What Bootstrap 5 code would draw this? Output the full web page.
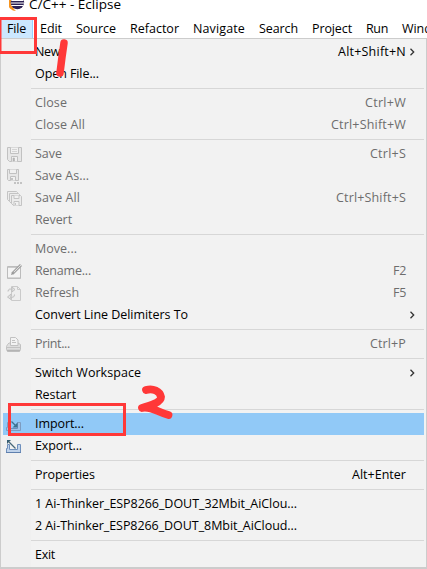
<!DOCTYPE html>
<html lang="en">
<head>
<meta charset="utf-8">
<title>C/C++ - Eclipse</title>
<link rel="stylesheet" href="https://cdn.jsdelivr.net/npm/bootstrap@5.3.0/dist/css/bootstrap.min.css">
<style>
html,body{width:427px;height:569px;overflow:hidden;background:#fff}
body{font-family:"Open Sans","Noto Sans",sans-serif;font-size:12.5px;line-height:22px;color:#000}
.titlebar{height:18px}
.titlebar svg{margin:-5px 0 0 9px}
.caption{font-size:13.5px;line-height:20px;margin:-6px 0 0 4px}
.menubar{height:20px;line-height:20px;flex-wrap:nowrap;overflow:hidden}
.menubar .nav-link{padding:1px 7px 0;color:#000;height:20px;line-height:20px;flex:none}
.menubar .nav-link.active{background:#cce8ff;border-right:1px solid #99d1ff;padding-right:6px}
.filemenu{height:531px;background:#f2f2f2;border:1px solid #ccc;border-bottom-width:2px;padding:2px 2px 0;background-image:linear-gradient(#f0f0f0,#f0f0f0);background-size:30px 100%;background-repeat:no-repeat}
.entry{height:22px;line-height:22px;white-space:nowrap;padding:0;color:#000}
.entry.off{color:#6d6d6d}
.entry.hot{background:#91c9f7}
.entry .ico{width:32px;height:22px;flex:none}
.entry .ico svg{display:block;margin:4px 0 0 4px}
.entry .ico .port{margin-left:3px}
.entry.off .ico svg{opacity:.85}
.entry .keys{margin-left:auto}
.entry .arr{width:18px;flex:none;height:22px}
.entry .arr svg{display:block;margin:7px 0 0 2px}
.rule{height:1px;background:#d7d7d7;margin:3px 0 3px 28px}
[data-w]{display:inline-block;white-space:nowrap}
.markup{left:0;top:0;pointer-events:none}
</style>
<script src="https://cdn.jsdelivr.net/npm/bootstrap@5.3.0/dist/js/bootstrap.bundle.min.js"></script>
</head>
<body class="position-relative m-0">
<header>
  <div class="titlebar d-flex align-items-start">
    <svg width="16" height="16" viewBox="0 0 16 16"><path d="M7 0A8 8 0 0 0 7 16A10 10 0 0 1 7 0" fill="#f7941e"/><circle cx="8.4" cy="7.5" r="6.7" fill="#2c2255"/><path d="M2.3 5.5h12.2M1.8 8h13.2M2.3 10.500h12.2" stroke="#fff" stroke-width="1"/></svg>
    <div class="caption"><span data-w="92">C/C++ - Eclipse</span></div>
  </div>
  <nav class="menubar nav">
    <a class="nav-link active"><span data-w="19">File</span></a>
    <a class="nav-link"><span data-w="22">Edit</span></a>
    <a class="nav-link"><span data-w="40">Source</span></a>
    <a class="nav-link"><span data-w="49">Refactor</span></a>
    <a class="nav-link"><span data-w="52">Navigate</span></a>
    <a class="nav-link"><span data-w="39">Search</span></a>
    <a class="nav-link"><span data-w="40">Project</span></a>
    <a class="nav-link"><span data-w="22">Run</span></a>
    <a class="nav-link"><span data-w="47">Window</span></a>
  </nav>
</header>
<main class="filemenu d-flex flex-column">
  <div class="entry d-flex"><span class="ico"></span><span data-w="25">New</span><span class="keys" data-w="68">Alt+Shift+N</span><span class="arr"><svg width="8" height="8"><path d="M2.5 .8L5.7 4 2.5 7.2" fill="none" stroke="#333" stroke-width="1.3"/></svg></span></div>
  <div class="entry d-flex"><span class="ico"></span><span data-w="64">Open File...</span></div>
  <div class="rule"></div>
  <div class="entry off d-flex"><span class="ico"></span><span data-w="32">Close</span><span class="keys" data-w="41">Ctrl+W</span><span class="arr"></span></div>
  <div class="entry off d-flex"><span class="ico"></span><span data-w="50">Close All</span><span class="keys" data-w="75">Ctrl+Shift+W</span><span class="arr"></span></div>
  <div class="rule"></div>
  <div class="entry off d-flex"><span class="ico"><svg width="16" height="16" fill="none" stroke="#b9b9b9"><path d="M.5 .5h14v14H2.5l-2-2z" fill="#e6e6e6"/><path d="M3.5 .5v6h8v-6M4.5 14.5v-5h6v5" fill="#f2f2f2"/><path d="M5 2.5h5M5 4.5h5" stroke="#d0d0d0"/><path d="M6 11h1.5v3H6z" fill="#aaa" stroke="#aaa" stroke-width=".6"/></svg></span><span data-w="27">Save</span><span class="keys" data-w="36">Ctrl+S</span><span class="arr"></span></div>
  <div class="entry off d-flex"><span class="ico"><svg width="16" height="16" fill="none" stroke="#b9b9b9"><path d="M.5 .5h11v11h-10l-1-1z" fill="#e6e6e6"/><path d="M2.5 .5v4h7v-4M3.5 11.5v-4h5v4" fill="#f2f2f2"/><path d="M5 9v2" stroke="#aaa" stroke-width="1.5"/><path d="M7 14h2M10 14h2M13 14h2" stroke="#aaa" stroke-width="1.5"/></svg></span><span data-w="54">Save As...</span></div>
  <div class="entry off d-flex"><span class="ico"><svg width="16" height="16" fill="#ececec" stroke="#bdbdbd"><path d="M.5 .5h9l1 1v9h-8l-2-2z"/><path d="M2.5 2.5h9l1 1v9h-8l-2-2z"/><path d="M4.5 4.5h9l1 1v9h-8l-2-2z"/><path d="M7 4.5v3h5v-3M7 14.5v-4h5v4" fill="#f2f2f2"/><path d="M8.5 12v2"/></svg></span><span data-w="45">Save All</span><span class="keys" data-w="70">Ctrl+Shift+S</span><span class="arr"></span></div>
  <div class="entry off d-flex"><span class="ico"></span><span data-w="37">Revert</span></div>
  <div class="rule"></div>
  <div class="entry off d-flex"><span class="ico"></span><span data-w="42">Move...</span></div>
  <div class="entry off d-flex"><span class="ico"><svg width="16" height="16" fill="none"><path d="M.5 2.5h13v12H.5z" fill="#f5f5f5" stroke="#b3b3b3"/><path d="M1 3.5h12M1 13.8h12" stroke="#c4c4c4"/><path d="M5.5 9.5L14 1" stroke="#999" stroke-width="3"/><path d="M7 8L14 1" stroke="#ddd"/><path d="M4 11l1-3 2 2z" fill="#888"/></svg></span><span data-w="56">Rename...</span><span class="keys" data-w="13">F2</span><span class="arr"></span></div>
  <div class="entry off d-flex"><span class="ico"><svg width="16" height="16" fill="none"><path d="M4.5 .5h6l3 3v11h-9z" fill="#eee" stroke="#c4c4c4"/><path d="M10.5 .5v3h3" stroke="#c4c4c4"/><path d="M1 5.5C1 3 3 2.5 5 3.5M5 1v5L8 3.5zM7.5 8.5C8 11 5 12 3 11M4 8v5.5L.5 11z" fill="#e3e3e3" stroke="#b8b8b8"/></svg></span><span data-w="44">Refresh</span><span class="keys" data-w="13">F5</span><span class="arr"></span></div>
  <div class="entry d-flex"><span class="ico"></span><span data-w="153">Convert Line Delimiters To</span><span class="keys"></span><span class="arr"><svg width="8" height="8"><path d="M2.5 .8L5.7 4 2.5 7.2" fill="none" stroke="#333" stroke-width="1.3"/></svg></span></div>
  <div class="rule"></div>
  <div class="entry off d-flex"><span class="ico"><svg class="port" width="16" height="16" stroke="#b9b9b9"><path d="M1.5 7.500L3 6h9l2.500 1.500v5l-1 2h-12l-1-2v-3z" fill="#dcdcdc"/><path d="M4.500 8.500v-8h5l2.500 2.500v5.500z" fill="#f4f4f4"/><path d="M6 3.500h3M6 5.500h4M.5 10.500h14" stroke="#bbb"/><path d="M1 13.500h13" stroke="#aaa" stroke-width="1.500"/></svg></span><span data-w="35">Print...</span><span class="keys" data-w="36">Ctrl+P</span><span class="arr"></span></div>
  <div class="rule"></div>
  <div class="entry d-flex"><span class="ico"></span><span data-w="106">Switch Workspace</span><span class="keys"></span><span class="arr"><svg width="8" height="8"><path d="M2.5 .8L5.7 4 2.5 7.2" fill="none" stroke="#333" stroke-width="1.3"/></svg></span></div>
  <div class="entry d-flex"><span class="ico"></span><span data-w="41">Restart</span></div>
  <div class="rule"></div>
  <div class="entry hot d-flex"><span class="ico"><svg class="port" width="16" height="16" fill="none"><path d="M.5 13.500V10.500H1.500V5.500h3M11 5.500h3.500v8H.5" fill="#9fc3e8" stroke="#7d9cc0"/><path d="M3.500 6v5.500h8V6" stroke="#6c8fbc" fill="#91c9f7"/><path d="M5.500 4.500l4 4" stroke="#3c7390" stroke-width="1.200"/><path d="M11.500 5.500v5h-5z" fill="#3c7390"/></svg></span><span data-w="49">Import...</span></div>
  <div class="entry d-flex"><span class="ico"><svg class="port" width="16" height="16" fill="none"><path d="M.5 13.500V9.500H1.500V5.500h2v5h8v-5h3v8z" fill="#bfd2ea" stroke="#6e8fbc"/><path d="M0 13.500h15" stroke="#5f80ae"/><path d="M3 3l6.500 6.500" stroke="#456678" stroke-width="1.200"/><path d="M1 1h4L1 5z" fill="#365d72"/></svg></span><span data-w="47">Export...</span></div>
  <div class="rule"></div>
  <div class="entry d-flex"><span class="ico"></span><span data-w="60">Properties</span><span class="keys" data-w="54">Alt+Enter</span><span class="arr"></span></div>
  <div class="rule"></div>
  <div class="entry d-flex"><span class="ico"></span><span data-w="262">1 Ai-Thinker_ESP8266_DOUT_32Mbit_AiClou...</span></div>
  <div class="entry d-flex"><span class="ico"></span><span data-w="262">2 Ai-Thinker_ESP8266_DOUT_8Mbit_AiCloud...</span></div>
  <div class="rule"></div>
  <div class="entry d-flex"><span class="ico"></span><span data-w="20">Exit</span></div>
</main>
<!-- hand-drawn annotations over the menu -->
<svg class="markup position-absolute" width="427" height="569" fill="none" stroke="#ff3838">
  <rect x="0" y="18.5" width="35.5" height="34" stroke-width="3"/>
  <path d="M64 43L62 57 60 73" stroke-width="7.5" stroke-linecap="round"/>
  <rect x="9.5" y="404.5" width="115" height="30" stroke-width="3"/>
  <path d="M146 390C153 388 160 391 161 397C161 402 152 405 142 408C151 406 157 412 168.500 415" stroke-width="7.8" stroke-linecap="round" stroke-linejoin="round"/>
</svg>
<script>
// Track each label so that its advance equals the width in data-w.
document.querySelectorAll('[data-w]').forEach(function (el) {
  var w = +el.dataset.w, n = el.textContent.length;
  el.style.letterSpacing = ((w - el.getBoundingClientRect().width) / n) + 'px';
  el.style.width = w + 'px';
});
</script>
</body>
</html>
